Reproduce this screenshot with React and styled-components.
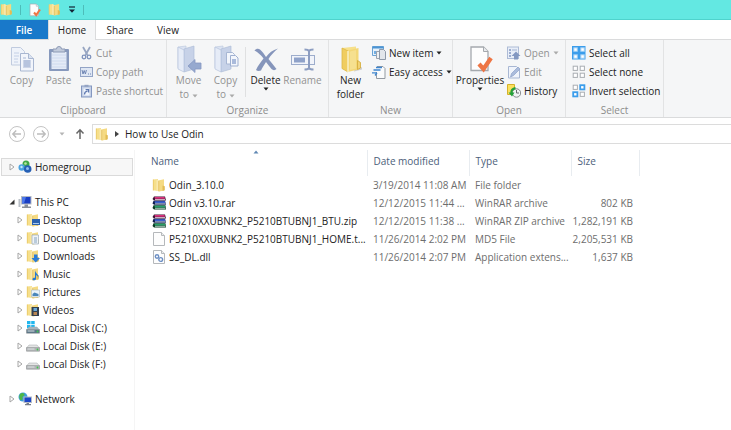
import React, {useState} from 'react'
import styled, {createGlobalStyle, css} from 'styled-components'

/* ---------- icons ---------- */

const FolderIcon = ({size = 14, children}) => (
  <svg width={size} height={size} viewBox="0 0 14 14">
    <path d="M1 1.500L6 1v12l-5-.700z" fill="#f6df8b" />
    <path d="M6 2.500L12 1.200v11.300l-5 1z" fill="#f5da82" />
    <path d="M4.500 1.200l2.800 1.500v10.800L4.500 12.600z" fill="#f9e9ae" />
    <path d="M6.800 3v10.300" stroke="#dfb74c" strokeWidth=".8" />
    <path d="M1.300 1.500v11" stroke="#e6c25c" strokeWidth=".7" />
    <path d="M10.500 7.500l2.300.8v3.900l-2.300.7z" fill="#e2bc55" />
    {children}
  </svg>
)

const CheckDocIcon = ({width, height}) => (
  <svg width={width} height={height} viewBox="0 0 26 28">
    <path d="M4 2h12.500l4.500 4.500V25.500H4z" fill="#fdfdfd" stroke="#a5a9ae" strokeWidth="1.300" />
    <path d="M16.500 2v4.500H21" fill="#e9ebee" stroke="#a5a9ae" />
    <path d="M12 19l4.500 5L24 13" fill="none" stroke="#ee7544" strokeWidth="4.200" />
  </svg>
)

const CopyIcon = () => (
  <svg width="26" height="28" viewBox="0 0 26 28">
    <path d="M2.500 2.500h9l4 4V20h-13z" fill="#eff3fa" stroke="#c0cbdf" />
    <path d="M5 8h5M5 11h5M5 14h4M5 17h4" stroke="#c4d0e6" />
    <path d="M11.500 8.500h8l5 5V26h-13z" fill="#f2f5fb" stroke="#a9b7d1" />
    <path d="M19.500 8.500v5h5" fill="#dbe3f1" stroke="#a9b7d1" />
    <path d="M14 13h3M14 16h8M14 18h8M14 20h8M14 22h8" stroke="#a7b6d4" />
    <path d="M15 15h6v7h-6z" fill="#b7c4de" />
  </svg>
)

const PasteIcon = () => (
  <svg width="26" height="28" viewBox="0 0 26 28">
    <rect x="3" y="4" width="20" height="22" rx="1" fill="#8799bd" />
    <rect x="5.500" y="7" width="15" height="17" fill="#e4ebf7" />
    <path d="M6 10h14M6 13h14M6 16h14M6 19h14M6 22h14" stroke="#cfdaee" />
    <path d="M7 7V4h3.500a2.500 2.500 0 015 0H19v3z" fill="#c2cbdc" stroke="#8c9ab5" />
  </svg>
)

const CutIcon = () => (
  <svg width="13" height="14" viewBox="0 0 13 14">
    <path d="M3 1l4.500 8M10 1L5.500 9" stroke="#98a6c2" strokeWidth="1.800" />
    <circle cx="4" cy="11" r="1.800" fill="none" stroke="#8094bd" strokeWidth="1.300" />
    <circle cx="9" cy="11" r="1.800" fill="none" stroke="#8094bd" strokeWidth="1.300" />
  </svg>
)

const PathIcon = () => (
  <svg width="13" height="14" viewBox="0 0 13 14">
    <rect x=".5" y="2.500" width="12" height="9" fill="#dfe7f4" stroke="#93a4c6" />
    <path d="M2 5l1 4 1.200-3.500L5.400 9l1-4" fill="none" stroke="#6f86b4" />
    <path d="M8 9h1M10 9h1" stroke="#6f86b4" strokeWidth="1.200" />
  </svg>
)

const ShortcutIcon = () => (
  <svg width="13" height="14" viewBox="0 0 13 14">
    <rect x="1.500" y="2" width="10" height="11" fill="#c4d0e7" stroke="#8497c0" />
    <path d="M4.500 0.800h4v2h-4z" fill="#93a3c2" />
    <rect x="3.500" y="4.500" width="6" height="7" fill="#f1f5fc" />
    <path d="M4.500 10.500c0-2 1-3 3-3.300M5.600 5.600h3v3" fill="none" stroke="#5f79b1" strokeWidth="1.300" />
  </svg>
)

const PaleFolder = () => (
  <g>
    <path d="M2 2l8-1v20l-8 2z" fill="#dbe3f2" stroke="#c0cbe0" strokeWidth=".7" />
    <path d="M8 4l10-3v23l-10 3z" fill="#c7d2e8" stroke="#b0bed9" strokeWidth=".7" />
    <path d="M2 2l6 3v22l-6-3z" fill="#e6ecf7" stroke="#b6c3dc" strokeWidth=".7" />
  </g>
)

const MoveIcon = () => (
  <svg width="26" height="28" viewBox="0 0 26 28">
    <PaleFolder />
    <path d="M12 21l7-6.500v3.500h6v6h-6v3.500z" fill="#96a9cf" stroke="#8598c1" strokeWidth=".8" />
  </svg>
)

const CopyToIcon = () => (
  <svg width="26" height="28" viewBox="0 0 26 28">
    <PaleFolder />
    <path d="M13.500 7.500h6l2 2V19h-8z" fill="#f3f6fc" stroke="#a7b6d3" />
    <path d="M17.500 10.500h5l2.500 2.500v8h-7.500z" fill="#f3f6fc" stroke="#9fb0d1" />
    <path d="M19 14h4v5h-4z" fill="#a9badb" />
  </svg>
)

const DeleteIcon = () => (
  <svg width="26" height="28" viewBox="0 0 26 28">
    <path d="M1.500 5.500c1.500-2 4-2.300 5.500-1 2.500 2.300 4.300 4.800 6 7.500 3-4 6.500-7 12-8.500-4 3.500-7.300 6.700-9.500 10.500 2.700 3.500 5.500 6.500 8 10-1.500 1.500-3.500 1.500-5 0-2-2.300-3.700-4.600-5.500-7-2 3-3.500 5.500-5 8.500-2 .8-3.800.6-5-.5 2-4.500 4.700-8 7.500-11.500C8 10 5 7.500 1.500 5.500z" fill="#8595bb" />
  </svg>
)

const RenameIcon = () => (
  <svg width="26" height="28" viewBox="0 0 26 28">
    <rect x="1.500" y="10.500" width="23" height="9" fill="#f1f4fa" stroke="#9dadcc" />
    <rect x="4" y="12.500" width="11" height="5" fill="#8fa2c9" />
    <path d="M14.500 4.500c2.500 0 4 .5 4.500 1.500.5-1 2-1.500 4.500-1.500M19 5v19M14.500 24.500c2.500 0 4-.5 4.500-1.500.5 1 2 1.500 4.500 1.500" fill="none" stroke="#8c9dc1" strokeWidth="2" />
  </svg>
)

const NewFolderIcon = () => (
  <svg width="26" height="28" viewBox="0 0 26 28">
    <path d="M18 20l6 2.500v2l-8 2z" fill="#cfcfcf" />
    <path d="M4 3l14-1.500v20L4 24z" fill="#f7e08a" />
    <path d="M9.500 5.500L20.500 3v21.500L9.500 27z" fill="#f3d777" />
    <path d="M12 6.500l6-1.400v18.500L12 25z" fill="#f6e08f" />
    <path d="M4 3l6 3v21l-6-3.500z" fill="#f0cd5f" stroke="#dcb748" strokeWidth=".8" />
    <path d="M10 6v21" stroke="#fdf6d2" strokeWidth="1.400" />
    <path d="M19.500 15.500l3 2v5.500l-3 1.500z" fill="#f1d274" stroke="#d3a935" strokeWidth=".8" />
  </svg>
)

const NewItemIcon = () => (
  <svg width="14" height="14" viewBox="0 0 14 14">
    <path d="M.5.500h11v9H.500z" fill="#e7f2fb" stroke="#6aa3d5" />
    <path d="M.5.500h11v2H.500z" fill="#4c94d3" />
    <path d="M2 5h3v3H2z" fill="#72ade0" />
    <path d="M4.500 5.500h5v7h-5z" fill="#eef1f4" stroke="#9aa3ae" />
    <path d="M7.500 3.500h4l2 2v8h-6z" fill="#e2e6eb" stroke="#8e99a8" />
  </svg>
)

const EasyAccessIcon = () => (
  <svg width="14" height="14" viewBox="0 0 14 14">
    <path d="M5 1.500h6l2 2v10H4.500V7" fill="#fafbfc" stroke="#939aa3" />
    <path d="M4 2.500h6M1.500 5h7M0 7.800h5M3 10.500L5 7.800" fill="none" stroke="#3f86cf" strokeWidth="1.300" />
  </svg>
)

const OpenIcon = () => (
  <svg width="14" height="14" viewBox="0 0 14 14">
    <rect x=".5" y="1" width="11" height="11.500" fill="#e8eef8" stroke="#adbbd6" />
    <path d="M2 4h2M2 7h2M2 10h2" stroke="#8398c1" strokeWidth="1.500" />
    <path d="M5 4h5" stroke="#a3b3d3" />
    <path d="M9 5.500l4.500 4.500h-2.500v3.500H7V10H4.500z" fill="#8398c1" />
  </svg>
)

const EditIcon = () => (
  <svg width="14" height="14" viewBox="0 0 14 14">
    <path d="M1.500 1.500h8l3 3v8.500h-11z" fill="#f0f4fb" stroke="#a8b7d3" />
    <path d="M3.500 12l1-3.500L11 2l2 2-6.500 6.500z" fill="#abbcdc" stroke="#8ea2c9" strokeWidth=".7" />
  </svg>
)

const HistoryIcon = () => (
  <svg width="14" height="14" viewBox="0 0 14 14">
    <path d="M.5.500h7v10h-7z" fill="#fbe05e" stroke="#d5b12a" />
    <circle cx="9.500" cy="9" r="4.200" fill="#f1f3f4" stroke="#85898c" />
    <path d="M9.500 6v3h2.500" fill="none" stroke="#686c70" />
    <path d="M8.500 4.200C5.500 4.500 4 6.500 4.500 9" fill="none" stroke="#23a13a" strokeWidth="2.200" />
    <path d="M1.500 8.500h6L5 12.500z" fill="#23a13a" />
  </svg>
)

const tiles = [[1, 1], [8, 1], [1, 8], [8, 8]]

const SelectIcon = ({picked, solid}) => (
  <svg width="14" height="14" viewBox="0 0 14 14">
    {solid && <rect width="13.500" height="13.500" fill="#3b9deb" />}
    {tiles.map(([x, y], i) => {
      const on = picked.includes(i)
      return (
        <rect
          key={i}
          x={solid ? x + 0.8 : x + 0.2}
          y={solid ? y + 0.8 : y + 0.2}
          width={solid ? 3.5 : 4.2}
          height={solid ? 3.5 : 4.2}
          fill="#fff"
          stroke={solid ? '#9ccdf5' : on ? '#3b9deb' : '#a9adb2'}
          strokeWidth={on && !solid ? 1.8 : 1}
        />
      )
    })}
  </svg>
)

const Caret = ({color = '#222'}) => (
  <svg width="6" height="4" viewBox="0 0 6 4">
    <path d="M.5.500h5L3 3.500z" fill={color} />
  </svg>
)

const CustomizeIcon = () => (
  <svg width="8" height="8" viewBox="0 0 8 8">
    <path d="M1 1h6" stroke="#123" strokeWidth="1.200" />
    <path d="M1 3.500h6L4 6.800z" fill="#123" />
  </svg>
)

const RoundArrow = ({flip}) => (
  <svg width="18" height="18" viewBox="0 0 18 18">
    <circle cx="9" cy="9" r="7.500" fill="none" stroke="#c4c4c4" />
    <path
      d={flip ? 'M5 9h8M9.800 5.500L13.200 9l-3.400 3.500' : 'M13 9H5M8.200 5.500L4.800 9l3.400 3.500'}
      fill="none"
      stroke="#bcbcbc"
      strokeWidth="1.400"
    />
  </svg>
)

const UpArrow = () => (
  <svg width="10" height="12" viewBox="0 0 10 12">
    <path d="M5 11V2M1.500 5.500L5 1.800l3.500 3.700" fill="none" stroke="#666" strokeWidth="1.500" />
  </svg>
)

const Twisty = ({open}) => (
  <svg width="6" height="8" viewBox="0 0 6 8">
    {open
      ? <path d="M5.500 1.500v5H.500z" fill="#333" />
      : <path d="M1 1l4 3-4 3z" fill="#fff" stroke="#a6a6a6" />}
  </svg>
)

const HomegroupIcon = () => (
  <svg width="14" height="14" viewBox="0 0 14 14">
    <circle cx="8" cy="4" r="3.500" fill="#3fa845" />
    <circle cx="3.700" cy="7.500" r="3.200" fill="#4aa3e0" />
    <circle cx="9.700" cy="9" r="3.800" fill="#2560b5" />
    <circle cx="7.500" cy="3.500" r="1.300" fill="#b9e6a0" />
    <circle cx="3.500" cy="7" r="1.200" fill="#c4e6fa" />
    <circle cx="9.500" cy="8.500" r="1.500" fill="#8fbdf0" />
  </svg>
)

const ComputerIcon = () => (
  <svg width="14" height="14" viewBox="0 0 14 14">
    <path d="M.5 4h2v8h-2z" fill="#b9bfc6" />
    <path d="M3 1h10.500v8.500H3z" fill="#b4bac2" />
    <path d="M4 2h8.500v6.500H4z" fill="#1a3fc4" />
    <path d="M4 2h4L6 8.500H4z" fill="#4d78e8" />
    <path d="M6.500 9.500h3.500v2H6.500zM4 11.500h9v1.500H4z" fill="#8a9099" />
  </svg>
)

const DiskIcon = ({system}) => (
  <svg width="14" height="14" viewBox="0 0 14 14">
    {system && <path d="M1 0h3.500v3.300H1zM5.200 0h3.500v3.300H5.200zM1 4h3.500v3.200H1zM5.200 4h3.500v3.200H5.200z" fill="#20b6ee" />}
    <path d="M3 6h8l2.500 3H.500z" fill={system ? '#a7b5be' : '#e4e5e5'} stroke="#a3a6a8" strokeWidth=".5" />
    <path d="M.5 8.700h13v3.500H.500z" fill={system ? '#567487' : '#b4b6b8'} stroke="#8b8f91" strokeWidth=".6" />
    <path d="M1.500 10h7" stroke="#dfe3e5" />
    <circle cx="11.500" cy="10.500" r=".9" fill="#3fc84c" />
  </svg>
)

const NetworkIcon = () => (
  <svg width="14" height="14" viewBox="0 0 14 14">
    <circle cx="5" cy="5" r="4.500" fill="#3b9fdf" />
    <path d="M2 2c2-1.500 4-1 4.500.5S4 4 4.500 6 3 9 2 7.500 1 4 2 2z" fill="#4fb748" />
    <path d="M5.500 4.500H14V11H5.500z" fill="#b6bcc6" />
    <path d="M6.500 5.500H13V10H6.500z" fill="#1c46c9" />
    <path d="M8.500 11h2.500v1H8.500zM7 12h6v1.200H7z" fill="#777e8a" />
  </svg>
)

const RarIcon = () => (
  <svg width="14" height="14" viewBox="0 0 14 14">
    <path d="M2 .5h11L14 4.500H2L.500 3z" fill="#3b1230" />
    <path d="M2.500 1h10l.5 1.800H3z" fill="#d8307c" />
    <path d="M3 3.500h10" stroke="#f4d6e4" strokeWidth=".8" />
    <path d="M1.500 4.800h11.500l1 4H2L.500 7.500z" fill="#101d4d" />
    <path d="M2.500 5.300h10.500l.3 1.800H3z" fill="#3d62cf" />
    <path d="M3 7.800h10.300" stroke="#d9e4f8" strokeWidth=".8" />
    <path d="M1.500 9.200h12l.5 4.300H2L.500 12z" fill="#0b3b24" />
    <path d="M2.500 9.700h10.500l.3 1.800H3z" fill="#26a069" />
    <path d="M3 12.300h10.300" stroke="#d5f1e2" strokeWidth=".8" />
  </svg>
)

const BlankIcon = ({gears}) => (
  <svg width="14" height="14" viewBox="0 0 14 14">
    <path d="M1.500.500h8l3 3v10h-11z" fill="#fdfdfd" stroke="#b5b8bb" />
    <path d="M9.500.500v3h3" fill="#eceeef" stroke="#b5b8bb" />
    {gears && <circle cx="5" cy="6.500" r="1.700" fill="none" stroke="#6c8fc4" strokeWidth="1.400" />}
    {gears && <circle cx="8.700" cy="9.500" r="1.900" fill="none" stroke="#6c8fc4" strokeWidth="1.400" />}
  </svg>
)

/* ---------- data ---------- */

const places = [
  {name: 'Desktop', icon: <FolderIcon><path d="M6 6h8v6H6z" fill="#2b62b0" /><path d="M7 10.500h6" stroke="#a8c8ee" /></FolderIcon>},
  {name: 'Documents', icon: <FolderIcon><path d="M6 4h6.500v9H6z" fill="#eff3f6" stroke="#9aabbb" strokeWidth=".7" /><path d="M8 7h3M8 9h3M8 11h3" stroke="#6c8fb5" strokeWidth=".8" /></FolderIcon>},
  {name: 'Downloads', icon: <FolderIcon><path d="M8 5.500h3.500v3.500H14L9.700 13.500 5.500 9H8z" fill="#2b7cd8" /></FolderIcon>},
  {name: 'Music', icon: <FolderIcon><path d="M9 3c0 3 4 4 3.500 8-.5-2-1.500-2.500-2.500-3v4c0 1.500-3.500 2-3.500.2 0-1.200 1.300-1.700 2.500-1.400z" fill="#2478d4" /></FolderIcon>},
  {name: 'Pictures', icon: <FolderIcon><path d="M5.500 5h8v7h-8z" fill="#eaf3fa" stroke="#a5b5c0" strokeWidth=".6" /><path d="M6.500 9l2-1.500 4 1.500v2h-6z" fill="#4a86ba" /></FolderIcon>},
  {name: 'Videos', icon: <FolderIcon><path d="M5.500 4h7.500v9H5.500z" fill="#34404e" /><path d="M7.500 5h3.500v3H7.500z" fill="#6aa8d8" /><path d="M7.500 9h3.500v3H7.500z" fill="#b98652" /></FolderIcon>},
  {name: 'Local Disk (C:)', icon: <DiskIcon system />},
  {name: 'Local Disk (E:)', icon: <DiskIcon />},
  {name: 'Local Disk (F:)', icon: <DiskIcon />},
]

const files = [
  {name: 'Odin_3.10.0', date: '3/19/2014 11:08 AM', type: 'File folder', size: '', icon: <FolderIcon />},
  {name: 'Odin v3.10.rar', date: '12/12/2015 11:44 ...', type: 'WinRAR archive', size: '802 KB', icon: <RarIcon />},
  {name: 'P5210XXUBNK2_P5210BTUBNJ1_BTU.zip', date: '12/12/2015 11:38 ...', type: 'WinRAR ZIP archive', size: '1,282,191 KB', icon: <RarIcon />},
  {name: 'P5210XXUBNK2_P5210BTUBNJ1_HOME.t...', date: '11/26/2014 2:02 PM', type: 'MD5 File', size: '2,205,531 KB', icon: <BlankIcon />},
  {name: 'SS_DL.dll', date: '11/26/2014 2:07 PM', type: 'Application extens...', size: '1,637 KB', icon: <BlankIcon gears />},
]

/* ---------- small building blocks ---------- */

const BigTool = ({icon, label, wide, disabled, caret}) => (
  <BigButton $wide={wide} disabled={disabled}>
    {icon}
    <span>{label}</span>
    {caret && <Caret />}
  </BigButton>
)

const SmallTool = ({icon, label, disabled, caret}) => (
  <SmallButton disabled={disabled}>
    {icon}
    <span>{label}</span>
    {caret && <Caret color={disabled ? '#aaa' : '#222'} />}
  </SmallButton>
)

const RibbonGroup = ({title, width, children}) => (
  <Group $width={width}>
    <Tools>{children}</Tools>
    <Caption>{title}</Caption>
  </Group>
)

function App() {
  const [tab, setTab] = useState('Home')
  const [place, setPlace] = useState('Homegroup')

  return (
    <Window>
      <GlobalStyle />
      <TitleBar>
        <FolderIcon size={13} />
        <Divider />
        <QuickButton aria-label="Properties"><CheckDocIcon width={13} height={14} /></QuickButton>
        <QuickButton aria-label="New folder"><FolderIcon size={13} /></QuickButton>
        <QuickButton aria-label="Customize"><CustomizeIcon /></QuickButton>
        <Divider />
      </TitleBar>

      <TabBar>
        <FileTab>File</FileTab>
        {['Home', 'Share', 'View'].map((name) => (
          <Tab key={name} $active={tab === name} onClick={() => setTab(name)}>{name}</Tab>
        ))}
      </TabBar>

      <Ribbon>
        <RibbonGroup title="Clipboard" width={167}>
          <BigTool icon={<CopyIcon />} label="Copy" disabled />
          <BigTool icon={<PasteIcon />} label="Paste" disabled />
          <Stack>
            <SmallTool icon={<CutIcon />} label="Cut" disabled />
            <SmallTool icon={<PathIcon />} label="Copy path" disabled />
            <SmallTool icon={<ShortcutIcon />} label="Paste shortcut" disabled />
          </Stack>
        </RibbonGroup>
        <RibbonGroup title="Organize" width={162}>
          <BigTool icon={<MoveIcon />} label={<>Move<br />to <Caret color="#aaa" /></>} disabled />
          <BigTool icon={<CopyToIcon />} label={<>Copy<br />to <Caret color="#aaa" /></>} disabled />
          <Rule />
          <BigTool icon={<DeleteIcon />} label="Delete" caret />
          <BigTool icon={<RenameIcon />} label="Rename" disabled />
        </RibbonGroup>
        <RibbonGroup title="New" width={124}>
          <BigTool icon={<NewFolderIcon />} label={<>New<br />folder</>} />
          <Stack>
            <SmallTool icon={<NewItemIcon />} label="New item" caret />
            <SmallTool icon={<EasyAccessIcon />} label="Easy access" caret />
          </Stack>
        </RibbonGroup>
        <RibbonGroup title="Open" width={113}>
          <BigTool icon={<CheckDocIcon width={26} height={28} />} label="Properties" wide caret />
          <Stack>
            <SmallTool icon={<OpenIcon />} label="Open" disabled caret />
            <SmallTool icon={<EditIcon />} label="Edit" disabled />
            <SmallTool icon={<HistoryIcon />} label="History" />
          </Stack>
        </RibbonGroup>
        <RibbonGroup title="Select" width={98}>
          <Stack>
            <SmallTool icon={<SelectIcon picked={[0, 1, 2, 3]} solid />} label="Select all" />
            <SmallTool icon={<SelectIcon picked={[]} />} label="Select none" />
            <SmallTool icon={<SelectIcon picked={[1, 2]} />} label="Invert selection" />
          </Stack>
        </RibbonGroup>
      </Ribbon>

      <AddressRow>
        <NavButton aria-label="Back" disabled><RoundArrow /></NavButton>
        <NavButton aria-label="Forward" disabled><RoundArrow flip /></NavButton>
        <NavButton aria-label="Recent locations"><Caret color="#b5b5b5" /></NavButton>
        <NavButton aria-label="Up"><UpArrow /></NavButton>
        <AddressBox>
          <FolderIcon />
          <svg width="4" height="8" viewBox="0 0 4 8"><path d="M0 1l4 3-4 3z" fill="#444" /></svg>
          <Crumb>How to Use Odin</Crumb>
        </AddressBox>
      </AddressRow>

      <Body>
        <Sidebar>
          <Place $selected={place === 'Homegroup'} onClick={() => setPlace('Homegroup')}>
            <Twisty /><HomegroupIcon /><span>Homegroup</span>
          </Place>
          <Section>
            <Place $selected={place === 'This PC'} onClick={() => setPlace('This PC')}>
              <Twisty open /><ComputerIcon /><span>This PC</span>
            </Place>
            {places.map((p) => (
              <Place key={p.name} $nested $selected={place === p.name} onClick={() => setPlace(p.name)}>
                <Twisty />{p.icon}<span>{p.name}</span>
              </Place>
            ))}
          </Section>
          <Section>
            <Place $selected={place === 'Network'} onClick={() => setPlace('Network')}>
              <Twisty /><NetworkIcon /><span>Network</span>
            </Place>
          </Section>
        </Sidebar>

        <FilePane>
          <SortMark><Caret color="#5f87b3" /></SortMark>
          <FileTable>
            <colgroup>
              <col width="232" />
              <col width="102" />
              <col width="102" />
              <col width="68" />
              <col />
            </colgroup>
            <thead>
              <tr>
                <th>Name</th>
                <th>Date modified</th>
                <th>Type</th>
                <th>Size</th>
                <td />
              </tr>
            </thead>
            <tbody>
              {files.map((file) => (
                <tr key={file.name}>
                  <td><FileName>{file.icon}{file.name}</FileName></td>
                  <td>{file.date}</td>
                  <td>{file.type}</td>
                  <td>{file.size}</td>
                  <td />
                </tr>
              ))}
            </tbody>
          </FileTable>
        </FilePane>
      </Body>
    </Window>
  )
}

/* ---------- styles ---------- */

const GlobalStyle = createGlobalStyle`
* {
  box-sizing: border-box;
}

body {
  margin: 0;
  background: #fff;
  font-family: "Open Sans", "Noto Sans", sans-serif;
  font-size: 10px;
  line-height: 12px;
  color: #222;
}

button {
  margin: 0;
  padding: 0;
  border: 0;
  background: none;
  font: inherit;
  color: inherit;
  white-space: nowrap;
}

svg {
  flex: none;
}
`

const Window = styled.div`
display: flex;
flex-direction: column;
min-height: 100vh;
`

const TitleBar = styled.header`
display: flex;
align-items: center;
gap: 7px;
height: 20px;
border-bottom: 1px solid #4fd3cd;
background: #63e8e2;
`

const Divider = styled.span`
width: 1px;
height: 10px;
background: #4dbdb9;
`

const QuickButton = styled.button`
display: flex;
`

const TabBar = styled.nav`
display: flex;
height: 20px;
border-bottom: 1px solid #dadbdc;
`

const Tab = styled.button`
width: 48px;
height: 20px;
border: solid transparent;
border-width: 0 1px;
${({$active}) => $active && css`
  border-color: #dadbdc;
  background: #f5f6f7;
`}
`

const FileTab = styled(Tab)`
height: 19px;
border: 0;
background: #1979ca;
color: #fff;
font-weight: 600;
`

const Ribbon = styled.section`
display: flex;
border-bottom: 1px solid #dadbdc;
background: #f5f6f7;
`

const Group = styled.div`
flex: none;
width: ${({$width}) => $width}px;
border-right: 1px solid #e2e3e4;
`

const Tools = styled.div`
display: flex;
height: 64px;
padding: 3px 0 0 3px;
`

const Caption = styled.div`
height: 13px;
text-align: center;
color: #8c8c8c;
`

const BigButton = styled.button`
display: flex;
flex-direction: column;
align-items: center;
width: ${({$wide}) => ($wide ? 48 : 37)}px;
padding-top: 2px;
line-height: 14px;
&:disabled {
  color: #929292;
}
`

const Stack = styled.div`
display: flex;
flex-direction: column;
padding-left: 3px;
`

const SmallButton = styled.button`
display: flex;
align-items: center;
gap: 3px;
height: 19px;
&:disabled {
  color: #929292;
}
`

const Rule = styled.span`
width: 1px;
height: 50px;
margin: 4px 1px 0;
background: #dfe0e1;
`

const AddressRow = styled.div`
display: flex;
align-items: center;
gap: 6px;
height: 32px;
padding-left: 8px;
`

const NavButton = styled.button`
display: flex;
justify-content: center;
min-width: 12px;
`

const AddressBox = styled.div`
display: flex;
flex: 1;
align-items: center;
gap: 6px;
height: 20px;
padding-left: 2px;
border: 1px solid #dcdcdc;
border-right: 0;
`

const Crumb = styled.button`
color: #222;
`

const Body = styled.main`
display: flex;
flex: 1;
`

const Sidebar = styled.aside`
flex: none;
width: 135px;
padding: 8px 1px 16px;
border-right: 1px solid #f5f5f5;
`

const Section = styled.div`
padding-top: 17px;
`

const Place = styled.button`
display: flex;
align-items: center;
gap: 3px;
width: 100%;
height: 18px;
padding-left: ${({$nested}) => ($nested ? 15 : 7)}px;
border: 1px solid ${({$selected}) => ($selected ? '#dadada' : 'transparent')};
background: ${({$selected}) => ($selected ? '#f7f7f7' : 'none')};
`

const FilePane = styled.section`
position: relative;
flex: 1;
min-width: 0;
`

const SortMark = styled.span`
position: absolute;
top: 0;
left: 118px;
display: flex;
transform: rotate(180deg);
`

const FileTable = styled.table`
width: 100%;
table-layout: fixed;
border-collapse: collapse;
white-space: nowrap;
th {
  height: 26px;
  padding: 0 0 4px 6px;
  border-right: 1px solid #e8ecf0;
  font-weight: 400;
  text-align: left;
  color: #4c607a;
}
td {
  height: 18px;
  padding: 0 0 0 6px;
  color: #6d6d6d;
}
th:first-child {
  padding-left: 16px;
}
td:first-child {
  padding-left: 17px;
  color: #222;
}
td:nth-child(4) {
  padding: 0 6px 0 0;
  text-align: right;
}
`

const FileName = styled.span`
display: flex;
align-items: center;
gap: 3px;
`

export default App
